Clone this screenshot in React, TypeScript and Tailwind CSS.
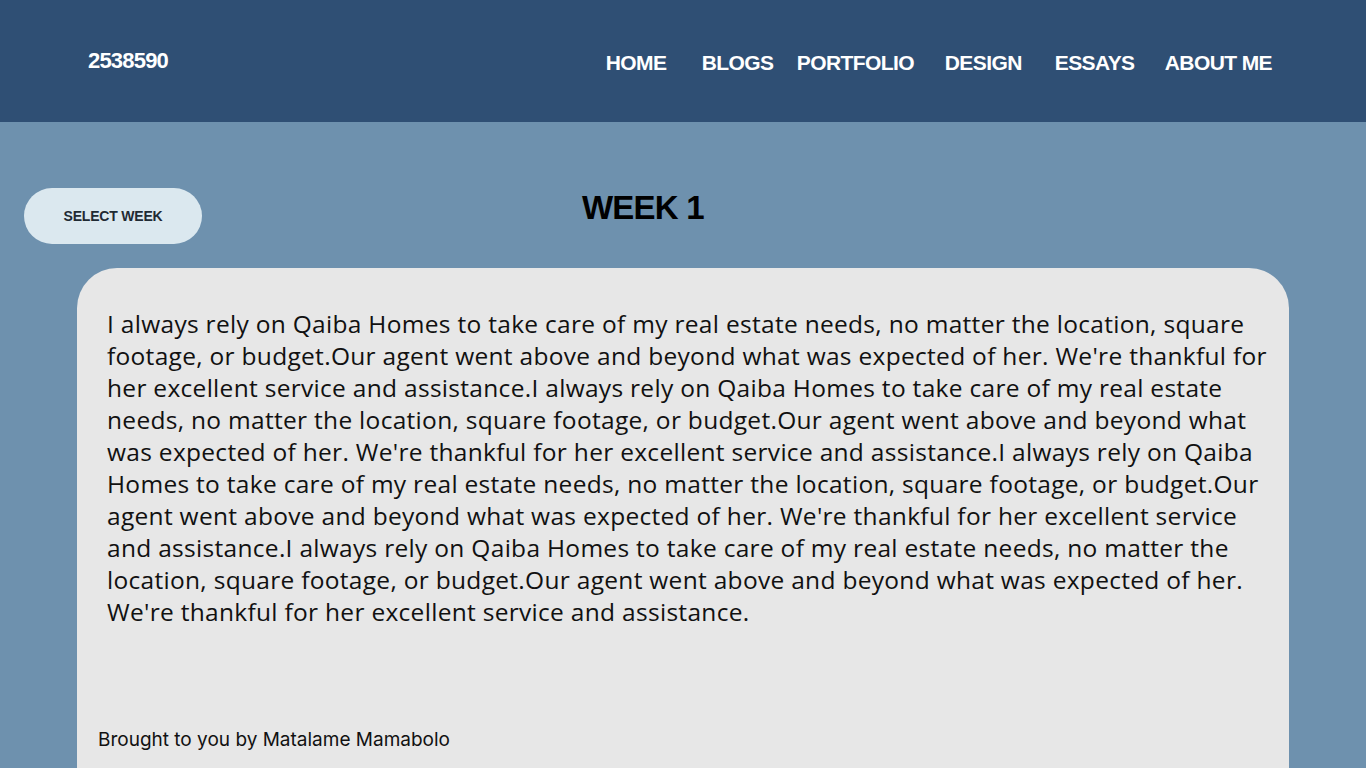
export default function App() {
  const para =
    "I always rely on Qaiba Homes to take care of my real estate needs, no matter the location, square footage, or budget.Our agent went above and beyond what was expected of her. We're thankful for her excellent service and assistance.";
  const body = para + para + para + para;

  return (
    <div className="min-h-screen h-[768px] overflow-hidden bg-[#6e91ae] flex flex-col">
      <header className="h-[122px] shrink-0 bg-[#2f4f74] flex items-center justify-between pl-[88px] pr-[94px] text-white font-['Liberation_Sans',sans-serif] font-bold">
        <div className="text-[22px] tracking-[-0.8px] -mt-[1px]">2538590</div>
        <nav className="flex items-center text-[21px] tracking-[-0.6px] mt-[3px]">
          {[
            { name: 'HOME', w: 'w-[96px]' },
            { name: 'BLOGS', w: 'w-[95px]' },
            { name: 'PORTFOLIO', w: 'w-[148px]' },
            { name: 'DESIGN', w: 'w-[110px]' },
            { name: 'ESSAYS', w: 'w-[110px]' },
            { name: 'ABOUT ME', w: '' },
          ].map((item) => (
            <a key={item.name} href="#" className={`${item.w} whitespace-nowrap`}>
              {item.name}
            </a>
          ))}
        </nav>
      </header>

      <main className="flex-1 flex flex-col">
        <div className="relative h-[146px] shrink-0">
          <button className="absolute left-[24px] top-[66px] w-[178px] h-[56px] rounded-full bg-[#dbe8ef] text-[#1f2a33] text-[14px] font-semibold font-['Liberation_Sans',sans-serif] tracking-[-0.2px]">
            SELECT WEEK
          </button>
          <h1 className="absolute left-[582px] top-[61px] text-[33px] font-bold text-black font-['Liberation_Sans',sans-serif] tracking-[-0.8px]">
            WEEK 1
          </h1>
        </div>

        <section className="flex-1 mx-[77px] bg-[#e7e7e7] rounded-t-[40px] flex flex-col pt-[40px] min-h-[520px]">
          <p className="pl-[30px] w-[1192px] text-[24.5px] leading-[32px] tracking-[0.3px] text-[#111] font-['Open_Sans',sans-serif]">
            {body}
          </p>
          <div className="mt-auto mb-[34px] pl-[21px] text-[19px] text-[#111] font-['Inter',sans-serif]">
            Brought to you by Matalame Mamabolo
          </div>
        </section>
      </main>
    </div>
  );
}
